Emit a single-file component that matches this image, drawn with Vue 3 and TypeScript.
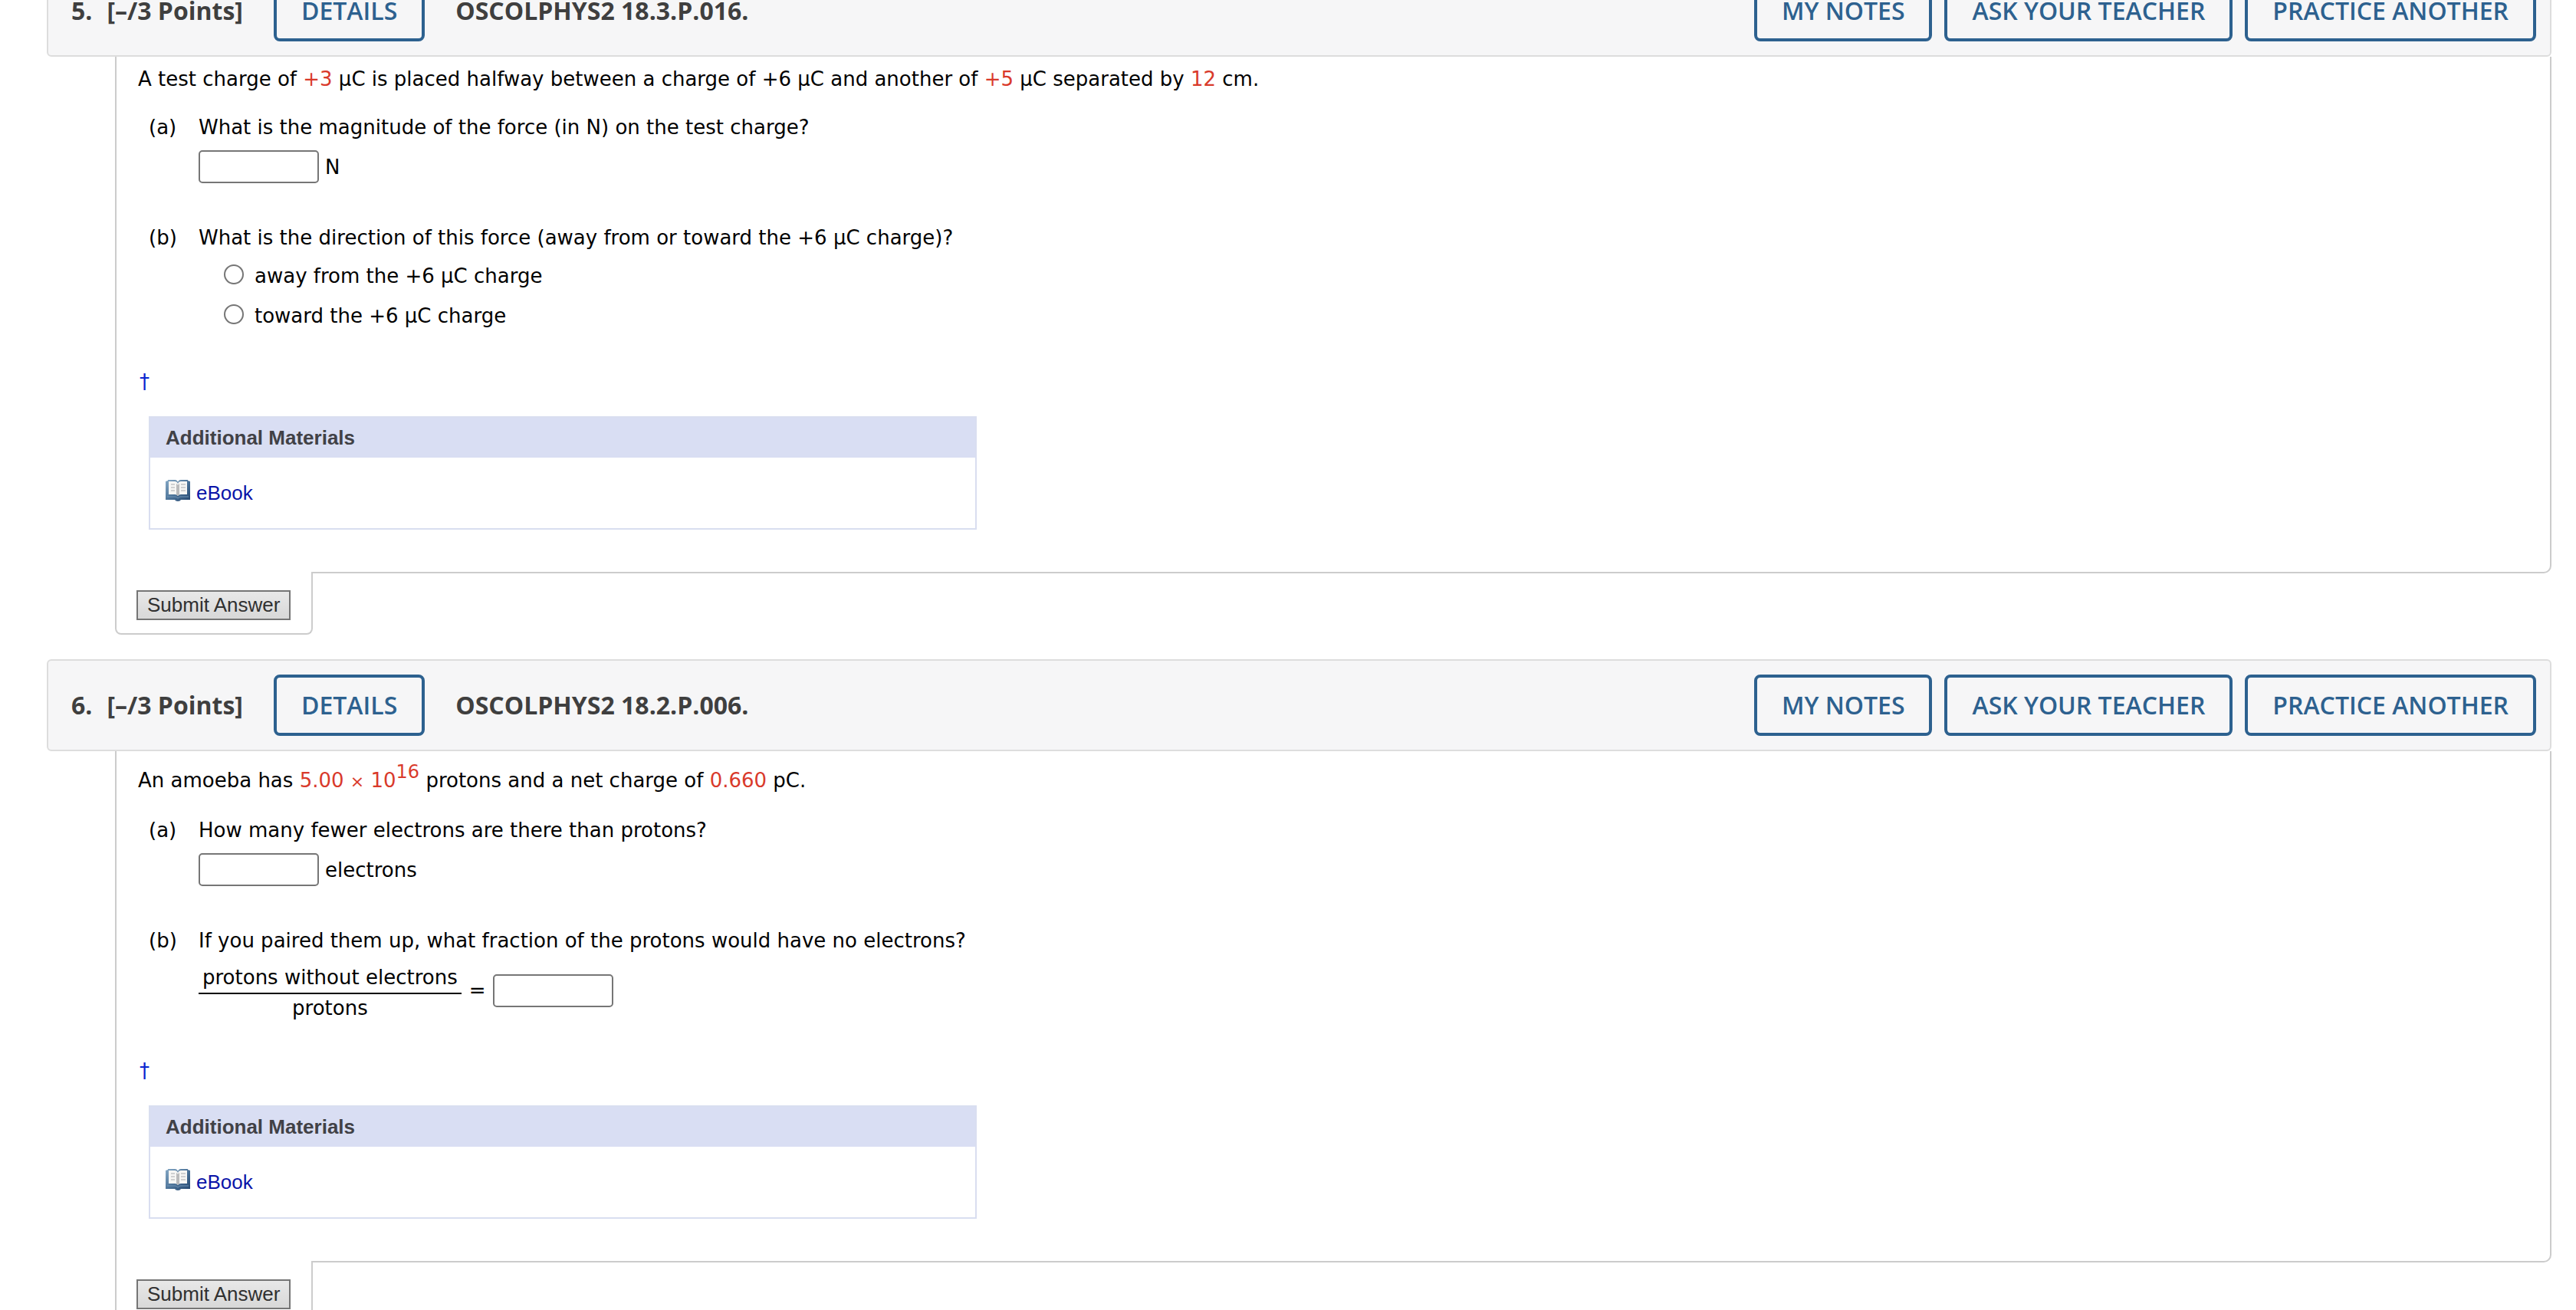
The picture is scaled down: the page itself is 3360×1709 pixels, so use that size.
<script setup lang="ts">
import { reactive } from 'vue'

interface Problem {
  id: string
  number: string
  points: string
  code: string
}

const problems: Problem[] = [
  { id: 'q5', number: '5.', points: '[–/3 Points]', code: 'OSCOLPHYS2 18.3.P.016.' },
  { id: 'q6', number: '6.', points: '[–/3 Points]', code: 'OSCOLPHYS2 18.2.P.006.' },
]

const actions: string[] = ['MY NOTES', 'ASK YOUR TEACHER', 'PRACTICE ANOTHER']

const directions: { value: string; label: string }[] = [
  { value: 'away', label: 'away from the +6 µC charge' },
  { value: 'toward', label: 'toward the +6 µC charge' },
]

const answers = reactive({ force: '', direction: '', electrons: '', fraction: '' })
</script>

<template>
  <main class="viewport">
    <div class="assignment">
      <article v-for="p in problems" :key="p.id" class="problem">
        <header class="bar">
          <h2 class="label">
            <span>{{ p.number }}</span>
            <span>{{ p.points }}</span>
          </h2>
          <button type="button" class="action">DETAILS</button>
          <h3 class="label">{{ p.code }}</h3>
          <div class="actions">
            <button v-for="a in actions" :key="a" type="button" class="action">{{ a }}</button>
          </div>
        </header>

        <section class="body" :class="p.id">
          <template v-if="p.id === 'q5'">
            <p class="line">
              A test charge of <span class="value">+3</span> µC is placed halfway between a charge of +6 µC and
              another of <span class="value">+5</span> µC separated by <span class="value">12</span> cm.
            </p>
            <div class="part">
              <span class="line">(a)</span>
              <div>
                <label class="line" for="force">What is the magnitude of the force (in N) on the test charge?</label>
                <div class="entry">
                  <input id="force" v-model="answers.force" type="text" class="box" />
                  <span>N</span>
                </div>
              </div>
            </div>
            <div class="part">
              <span class="line">(b)</span>
              <div>
                <p class="line">
                  What is the direction of this force (away from or toward the +6 µC charge)?
                </p>
                <div class="choices">
                  <label v-for="d in directions" :key="d.value" class="choice">
                    <input v-model="answers.direction" type="radio" name="direction" :value="d.value" />
                    <span>{{ d.label }}</span>
                  </label>
                </div>
              </div>
            </div>
          </template>

          <template v-else>
            <p class="line">
              An amoeba has <span class="value">5.00 <span class="times">×</span> 10<sup>16</sup></span> protons and a net charge of
              <span class="value">0.660</span> pC.
            </p>
            <div class="part">
              <span class="line">(a)</span>
              <div>
                <label class="line" for="electrons">How many fewer electrons are there than protons?</label>
                <div class="entry">
                  <input id="electrons" v-model="answers.electrons" type="text" class="box" />
                  <span>electrons</span>
                </div>
              </div>
            </div>
            <div class="part">
              <span class="line">(b)</span>
              <div>
                <label class="line" for="fraction">
                  If you paired them up, what fraction of the protons would have no electrons?
                </label>
                <div class="equation">
                  <span class="fraction">
                    <span class="numerator">protons without electrons</span>
                    <span class="denominator">protons</span>
                  </span>
                  <span>=</span>
                  <input id="fraction" v-model="answers.fraction" type="text" class="box" />
                </div>
              </div>
            </div>
          </template>

          <a class="dagger" href="#">†</a>

          <aside class="materials">
            <h4>Additional Materials</h4>
            <a href="#" class="ebook">
              <svg width="32" height="30" viewBox="0 0 32 30" aria-hidden="true">
                <defs>
                  <linearGradient :id="p.id + '-cover'" x1="0" y1="0" x2="1" y2="1">
                    <stop offset="0" stop-color="#86a9c6" />
                    <stop offset="0.5" stop-color="#4d7499" />
                    <stop offset="1" stop-color="#23466f" />
                  </linearGradient>
                </defs>
                <path
                  d="M0 3 L3 2 V1 H12 Q15 1 16 4 Q17 1 20 1 H29 V2 L32 3 V27 H20 Q19 29 16 29 Q13 29 12 27 H0Z"
                  :fill="'url(#' + p.id + '-cover)'"
                />
                <path d="M4 3 H12 Q15 3 16 6 Q17 3 20 3 H28 V20 H20 Q17 20 16 22 Q15 20 12 20 H4Z" fill="#f6f6f4" />
                <path d="M14 6 Q16 7 16 8 Q16 7 18 6 V20 L16 22 L14 20Z" fill="#b9babb" />
                <path
                  d="M7 7 H12 M7 11 H12 M7 15 H12 M20 7 H26 M20 11 H26 M20 15 H26"
                  stroke="#cfd0d1"
                  stroke-width="2"
                />
                <path d="M2 23 H13 Q15 24 16 25 Q17 24 19 23 H30" fill="none" stroke="#6f93b5" stroke-width="1" />
              </svg>
              <span>eBook</span>
            </a>
          </aside>
        </section>

        <footer class="tab">
          <button type="button" class="submit">Submit Answer</button>
        </footer>
      </article>
    </div>
  </main>
</template>

<style>
body {
  margin: 0;
  background: #fff;
}
</style>

<style scoped>
.viewport {
  height: 100vh;
  overflow: hidden;
  background: #fff;
  color: #000;
  font: 26px/32px Verdana, 'DejaVu Sans', sans-serif;
}

/* The list is shown scrolled part-way into the fifth problem's bar. */
.assignment {
  display: flex;
  flex-direction: column;
  gap: 32px;
  margin: -46px 32px 0 61px;
}

.bar {
  display: flex;
  align-items: center;
  gap: 40px;
  box-sizing: border-box;
  min-height: 120px;
  padding: 18px 18px 18px 30px;
  border: 2px solid #ddd;
  border-radius: 6px;
  background: #f6f6f7;
  font-family: 'Open Sans', sans-serif;
}

.label {
  display: flex;
  gap: 19px;
  margin: 0;
  color: #3f3f3f;
  font-size: 32px;
  font-weight: 700;
  white-space: nowrap;
}

.actions {
  display: flex;
  gap: 16px;
  margin-left: auto;
}

.action {
  height: 80px;
  padding: 0 32px;
  border: 4px solid #2d618f;
  border-radius: 8px;
  background: transparent;
  color: #2d618f;
  font: 600 32px/40px 'Open Sans', sans-serif;
  white-space: nowrap;
}

.body {
  margin-left: 89px;
  padding: 13px 28px 55px;
  border: 2px solid #ccc;
  border-top: 0;
  border-bottom-right-radius: 10px;
}

.line {
  display: block;
  margin: 0;
}

/* Room for the exponent in the opening line. */
.body.q6 {
  padding-top: 22px;
}

.value {
  color: #d93a2b;
}

.times {
  font-size: 22px;
}

sup {
  font-size: 24px;
  line-height: 0;
  vertical-align: 12px;
}

.part {
  display: grid;
  grid-template-columns: 65px 1fr;
  margin: 31px 0 44px 14px;
}

.part + .part {
  margin-top: 55px;
}

.entry {
  display: flex;
  align-items: center;
  gap: 8px;
  margin-top: 14px;
}

.box {
  box-sizing: border-box;
  width: 157px;
  height: 43px;
  padding: 2px 4px;
  border: 2px solid #767676;
  border-radius: 5px;
  background: #fff;
  font: inherit;
}

.choices {
  margin: 8px 0 0 33px;
}

.choice {
  display: flex;
  align-items: center;
  gap: 14px;
  height: 52px;
}

.choice input {
  appearance: none;
  box-sizing: border-box;
  width: 26px;
  height: 26px;
  margin: 0 0 4px;
  border: 2px solid #767676;
  border-radius: 50%;
  background: #fff;
}

.choice input:checked {
  background: radial-gradient(#0b5fd6 45%, #fff 50%);
}

.equation {
  display: flex;
  align-items: center;
  gap: 10px;
  margin: 10px 0 6px;
}

.fraction {
  display: flex;
  flex-direction: column;
  padding-top: 6px;
  text-align: center;
}

.numerator {
  padding: 0 5px 4px;
  border-bottom: 2px solid #000;
}

.denominator {
  padding-top: 2px;
}

.dagger {
  display: block;
  width: 14px;
  margin: 0 2px 29px;
  color: #0b25cf;
  text-decoration: none;
}

.materials {
  box-sizing: border-box;
  max-width: 1080px;
  margin-left: 14px;
  border: 2px solid #d9def0;
  font-family: Arial, 'Liberation Sans', sans-serif;
}

.materials h4 {
  margin: 0;
  padding: 10px 20px;
  background: #d9def3;
  color: #414146;
  font-size: 26px;
  font-weight: 700;
}

.ebook {
  display: flex;
  align-items: flex-end;
  gap: 8px;
  width: max-content;
  padding: 28px 20px 30px;
  color: #0a14a8;
  text-decoration: none;
}

.ebook svg {
  margin-bottom: 4px;
}

.tab {
  position: relative;
  box-sizing: border-box;
  width: 258px;
  margin: -2px 0 0 89px;
  padding: 24px 26px 17px;
  border: 2px solid #ccc;
  border-top: 0;
  border-radius: 0 0 8px 8px;
  background: #fff;
}

.submit {
  display: block;
  height: 39px;
  padding: 0 12px 2px;
  border: 2px solid #757575;
  border-radius: 0;
  background: linear-gradient(#e8e8e8, #d8d8d8);
  color: #303030;
  font: 26px/32px Arial, 'Liberation Sans', sans-serif;
  white-space: nowrap;
}
</style>
